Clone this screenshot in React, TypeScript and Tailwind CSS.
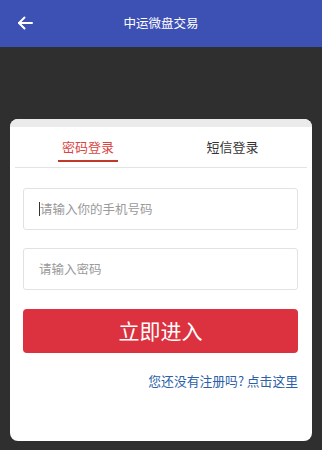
const CJK = { fontFamily: '"Noto Sans CJK SC", "Noto Sans", sans-serif' };

function BackArrow() {
  return (
    <svg width="16" height="14" viewBox="0 0 16 14" fill="none" stroke="white" strokeWidth="2" strokeLinecap="round" strokeLinejoin="round">
      <path d="M15 7H2" />
      <path d="M7.5 1.5L2 7l5.5 5.5" />
    </svg>
  );
}

export default function App() {
  return (
    <div className="w-[322px] h-[450px] bg-[#2f2f2f] overflow-hidden" style={CJK}>
      {/* Header */}
      <div className="relative h-[47px] bg-[#3d50b4] flex items-center justify-center">
        <div className="absolute left-[17px] top-[16px]">
          <BackArrow />
        </div>
        <span className="text-white text-[12.5px]">中运微盘交易</span>
      </div>

      {/* Card */}
      <div className="mx-[10px] mt-[72px] h-[322px] bg-white rounded-[8px] overflow-hidden">
        <div className="h-[8px] bg-[#ebebeb]" />

        {/* Tabs */}
        <div className="mx-[5px] flex border-b border-[#e3e3e3] h-[41px]">
          <div className="flex-1 flex justify-center items-end">
            <span className="px-[4px] pb-[3px] text-[13px] text-[#d9463f] border-b-2 border-[#c0392b] leading-[20px] mb-[5px]">
              密码登录
            </span>
          </div>
          <div className="flex-1 flex justify-center items-end">
            <span className="px-[4px] pb-[3px] text-[13px] text-[#333] leading-[20px] mb-[7px] mr-[3px]">
              短信登录
            </span>
          </div>
        </div>

        <div className="pl-[13px] pr-[14px] pt-[20px] flex flex-col">
          <div className="h-[42px] border border-[#e2e2e2] rounded-[3px] flex items-center pl-[15px]">
            <span className="w-px h-[14px] bg-[#333]" />
            <span className="text-[12.5px] text-[#9a9a9a]">请输入你的手机号码</span>
          </div>
          <div className="mt-[18px] h-[42px] border border-[#e2e2e2] rounded-[3px] flex items-center pl-[15px]">
            <span className="text-[12.5px] text-[#9a9a9a]">请输入密码</span>
          </div>
          <button className="mt-[19px] h-[44px] rounded-[4px] bg-[#dc3240] text-white text-[21px] flex items-center justify-center">
            立即进入
          </button>
          <div className="mt-[19px] text-right text-[12.8px] text-[#2c5fa8] leading-[17px]">
            您还没有注册吗? 点击这里
          </div>
        </div>
      </div>
    </div>
  );
}
